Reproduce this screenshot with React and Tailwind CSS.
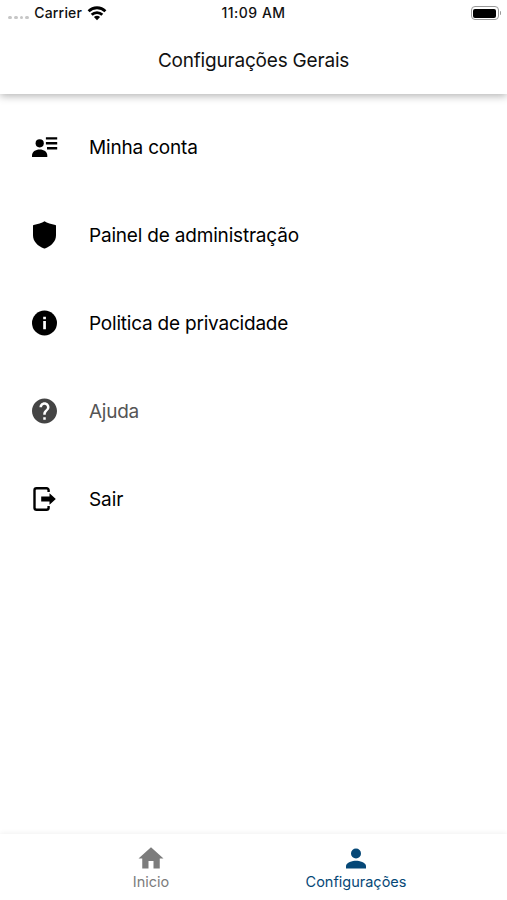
const items = [
  { label: 'Minha conta', icon: AccountIcon, tone: 'text-black', tracking: 'tracking-[-0.180px]' },
  { label: 'Painel de administração', icon: ShieldIcon, tone: 'text-black', tracking: 'tracking-[-0.190px]' },
  { label: 'Politica de privacidade', icon: InfoIcon, tone: 'text-black', tracking: 'tracking-[-0.210px]' },
  { label: 'Ajuda', icon: HelpIcon, tone: 'text-[#555]', tracking: 'tracking-[-0.250px]' },
  { label: 'Sair', icon: ExitIcon, tone: 'text-black', tracking: 'tracking-[-0.100px]' },
];

function Icon({ children }) {
  return (
    <svg viewBox="0 0 30 30" className="h-[30px] w-[30px] shrink-0" fill="currentColor">
      {children}
    </svg>
  );
}

function AccountIcon() {
  return (
    <Icon>
      <circle cx="10.700" cy="11.300" r="4.100" />
      <path d="M3 25v-1.500c0-3.700 3.500-6 7.700-6s7.600 2.300 7.600 6V25z" />
      <path d="M16.900 5.200h11.300v2.400H16.900zM16.900 10.100h11.300v2.400H16.900zM18 15.100h10.200v2.400H18z" />
    </Icon>
  );
}

function ShieldIcon() {
  return (
    <Icon>
      <path d="M15.500 1.300C12.900 3.200 8.700 4.100 4.600 5c-.4.100-.6.400-.6.800v9.400c0 6.400 4.800 10.800 11.100 13.200.3.100.5.100.8 0C22.200 26 27 21.600 27 15.200V5.800c0-.4-.2-.7-.6-.8-4.100-.9-8.300-1.800-10.900-3.700z" />
    </Icon>
  );
}

function InfoIcon() {
  return (
    <Icon>
      <circle cx="15.500" cy="15" r="12.500" />
      <path fill="white" d="M14.200 8.700h2.700v2.600h-2.700zM14.200 13h2.700v8.200h-2.700z" />
    </Icon>
  );
}

function HelpIcon() {
  return (
    <Icon>
      <g className="text-[#444]" fill="currentColor" transform="translate(.5 0) scale(1.25)">
        <path d="M12 2C6.480 2 2 6.480 2 12s4.480 10 10 10 10-4.480 10-10S17.520 2 12 2zm1 17h-2v-2h2v2zm2.070-7.750l-.9.920C13.450 12.900 13 13.500 13 15h-2v-.5c0-1.100.450-2.100 1.170-2.830l1.240-1.260c.370-.360.590-.860.590-1.410 0-1.100-.9-2-2-2s-2 .9-2 2H8c0-2.210 1.790-4 4-4s4 1.790 4 4c0 .880-.360 1.680-.930 2.250z" />
      </g>
    </Icon>
  );
}

function ExitIcon() {
  return (
    <Icon>
      <path
        d="M19.600 8V6.200a2 2 0 0 0-2-2H7.500a2 2 0 0 0-2 2v17.600a2 2 0 0 0 2 2H17.600a2 2 0 0 0 2-2V22"
        fill="none"
        stroke="currentColor"
        strokeWidth="2.400"
      />
      <path d="M12.200 12.500h8.300V9.300l6.300 5.700-6.300 5.700V17.500H12.200z" />
    </Icon>
  );
}

function StatusBar() {
  return (
    <div className="grid h-[26px] grid-cols-3 items-center text-[14px] font-medium text-[#111]">
      <div className="flex items-center pl-[8px]">
        <div className="mt-[8px] flex gap-[2px]">
          {[0, 1, 2, 3].map((n) => (
            <span key={n} className="h-[3px] w-[3.800px] rounded-full bg-[#c6c6c6]" />
          ))}
        </div>
        <span className="ml-[5px] leading-[18px] tracking-[0.200px] pb-[1px]">Carrier</span>
        <svg viewBox="0 0 20 16" className="ml-[5px] h-[16px] w-[20px]" fill="none" stroke="#000" strokeWidth="2.800">
          <path d="M1.600 6.200a12 12 0 0 1 16.800 0M4.700 9.700a7.600 7.600 0 0 1 10.600 0" />
          <path d="M10 15.200 6.900 12.100a4.500 4.500 0 0 1 6.200 0z" fill="#000" stroke="none" />
        </svg>
      </div>
      <span className="pb-[1px] text-center leading-[18px] tracking-[0.500px]">11:09 AM</span>
      <div className="flex items-center justify-end pr-[6px]">
        <div className="h-[14px] w-[28px] rounded-[4px] border border-[#999] p-[1.500px]">
          <div className="h-full w-full rounded-[2px] bg-black" />
        </div>
        <div className="ml-[1px] h-[4px] w-[1.500px] rounded-r bg-[#999]" />
      </div>
    </div>
  );
}

export default function App() {
  return (
    <div className="flex h-[900px] w-[507px] flex-col overflow-hidden bg-white font-['Inter','Liberation_Sans',sans-serif]">
      <header className="h-[94px] shrink-0 bg-white shadow-[0_2px_8px_rgba(0,0,0,0.300)]">
        <StatusBar />
        <h1 className="flex h-[68px] items-center justify-center pt-[2px] text-[19px] text-[#111]">
          <span className="tracking-[-0.200px]">Configurações Gerais</span>
        </h1>
      </header>

      <nav className="flex grow flex-col pt-[9px]">
        {items.map(({ label, icon: ItemIcon, tone, tracking }) => (
          <a key={label} className={`flex h-[88px] items-center gap-[30px] pl-[29px] ${tone}`}>
            <ItemIcon />
            <span className={`pt-[2px] text-[19px] ${tracking}`}>{label}</span>
          </a>
        ))}
      </nav>

      <footer className="flex h-[66px] shrink-0 justify-center bg-white text-[14.500px] leading-[18px] shadow-[0_-1px_5px_rgba(0,0,0,0.060)]">
        <a className="flex w-[205px] flex-col items-center pt-[9px] text-[#7c7c7c]">
          <svg viewBox="0 0 30 30" className="h-[30px] w-[30px]" fill="currentColor">
            <path d="M12.500 25.500v-7.500h5v7.500h6.250V15.500h3.750L15 4.250 2.500 15.500h3.750v10z" />
          </svg>
          <span>Inicio</span>
        </a>
        <a className="flex w-[205px] flex-col items-center pt-[9px] text-[#064877]">
          <svg viewBox="0 0 30 30" className="h-[30px] w-[30px]" fill="currentColor">
            <circle cx="15" cy="10.500" r="5" />
            <path d="M5 25.500v-2.500c0-3.300 6.700-5.200 10-5.200s10 1.900 10 5.200v2.500z" />
          </svg>
          <span>Configurações</span>
        </a>
      </footer>
    </div>
  );
}
